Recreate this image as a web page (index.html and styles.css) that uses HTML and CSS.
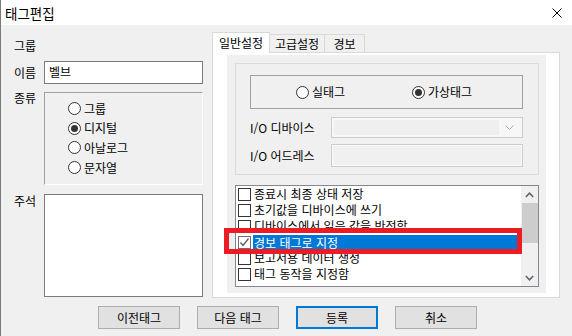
FILE: index.html
```html
<!DOCTYPE html>
<html lang="ko">
<head>
<meta charset="UTF-8">
<title>태그편집</title>
<link rel="stylesheet" href="styles.css">
</head>
<body>
<div class="window">
    <div class="titlebar">
        <span class="title">태그편집</span>
        <svg class="close" width="10" height="10" viewBox="0 0 10 10"><path d="M0.5 0.5 L9.5 9.5 M9.5 0.5 L0.5 9.5" stroke="#000" stroke-width="1"/></svg>
    </div>

    <div class="content">
        <div class="left">
            <div class="row r-group"><span class="lbl">그룹</span></div>
            <div class="row r-name"><span class="lbl">이름</span><div class="field">벨브</div></div>
            <div class="row r-kind">
                <span class="lbl">종류</span>
                <div class="kindbox">
                    <div class="radio"><span class="dot"></span>그룹</div>
                    <div class="radio on"><span class="dot"></span>디지털</div>
                    <div class="radio"><span class="dot"></span>아날로그</div>
                    <div class="radio"><span class="dot"></span>문자열</div>
                </div>
            </div>
            <div class="row r-memo"><span class="lbl">주석</span><div class="memo"></div></div>
        </div>

        <div class="tabs">
            <div class="tabstrip">
                <div class="tab active">일반설정</div>
                <div class="tab t2">고급설정</div>
                <div class="tab t3">경보</div>
            </div>
            <div class="panel">
                <div class="pane">
                    <div class="groupbox">
                        <div class="typebox">
                            <div class="radio opt"><span class="dot"></span>실태그</div>
                            <div class="radio on"><span class="dot"></span>가상태그</div>
                        </div>
                        <div class="frow combo-row">
                            <span class="flbl">I/O 디바이스</span>
                            <div class="combo">
                                <div class="combo-field"></div>
                                <svg width="9" height="5" viewBox="0 0 9 5"><path d="M0.5 0.5 L4.5 4.5 L8.5 0.5" fill="none" stroke="#a8a8a8" stroke-width="1"/></svg>
                            </div>
                        </div>
                        <div class="frow addr-row">
                            <span class="flbl">I/O 어드레스</span>
                            <div class="textbox"></div>
                        </div>
                    </div>

                    <div class="listbox">
                        <ul class="items">
                            <li><span class="chk"></span><span class="txt">종료시 최종 상태 저장</span></li>
                            <li><span class="chk"></span><span class="txt">초기값을 디바이스에 쓰기</span></li>
                            <li><span class="chk"></span><span class="txt">디바이스에서 읽은 값을 반전함</span></li>
                            <li class="sel"><span class="chk"><svg width="11" height="11" viewBox="0 0 11 11"><path d="M1.5 5.5 L4 8.5 L9.5 1.5" fill="none" stroke="#5a5a5a" stroke-width="1.3"/></svg></span><span class="txt">경보 태그로 지정</span></li>
                            <li><span class="chk"></span><span class="txt">보고서용 데이터 생성</span></li>
                            <li><span class="chk"></span><span class="txt">태그 동작을 지정함</span></li>
                        </ul>
                        <div class="scrollbar">
                            <div class="sb-btn"><svg width="9" height="6" viewBox="0 0 9 6"><path d="M0.8 5 L4.5 1.2 L8.2 5" fill="none" stroke="#606060" stroke-width="1.5"/></svg></div>
                            <div class="sb-track"><div class="sb-thumb"></div></div>
                            <div class="sb-btn"><svg width="9" height="6" viewBox="0 0 9 6"><path d="M0.8 1 L4.5 4.8 L8.2 1" fill="none" stroke="#606060" stroke-width="1.5"/></svg></div>
                        </div>
                        <div class="mark"></div>
                    </div>
                </div>
            </div>
        </div>
    </div>

    <div class="buttons">
        <button class="btn">이전태그</button>
        <button class="btn">다음 태그</button>
        <button class="btn default">등록</button>
        <button class="btn">취소</button>
    </div>
</div>
</body>
</html>
```

FILE: styles.css
```css
body { margin:0; width:572px; height:336px; overflow:hidden; background:#f0f0f0; font-family:"Noto Sans CJK KR","Liberation Sans",sans-serif; font-size:12px; color:#000; }
.window { height:336px; border-left:1px solid #7a7a7a; box-sizing:border-box; }

/* title bar */
.titlebar { height:25px; background:#fff; display:flex; align-items:center; justify-content:space-between; padding:0 10px 0 4px; font-size:13.5px; }
.close { display:block; }

.content { display:flex; align-items:flex-start; padding-left:13px; }

/* left column */
.left { width:189px; padding-top:13px; }
.row { display:flex; }
.lbl { width:30px; flex:none; line-height:16px; }
.r-name { margin-top:7px; align-items:center; }
.field { width:159px; height:23px; box-sizing:border-box; border:1px solid #7a7a7a; background:#fff; padding-left:4px; line-height:20px; }
.r-kind { margin-top:8px; }
.r-kind .lbl { line-height:14px; margin-top:-1px; }
.kindbox { width:159px; height:93px; box-sizing:border-box; border:1px solid #fff; border-left-color:#a0a0a0; border-top-color:#a0a0a0; padding:6px 0 0 23px; }
.kindbox .radio { height:19.6px; }
.r-memo { margin-top:9px; }
.r-memo .lbl { line-height:14px; }
.memo { width:159px; height:103px; box-sizing:border-box; border:1px solid #7a7a7a; background:#fff; }

/* radio buttons */
.radio { display:flex; align-items:center; line-height:14px; }
.dot { width:13px; height:13px; box-sizing:border-box; border:1px solid #333; border-radius:50%; background:#fff; margin-right:3px; position:relative; flex:none; }
.radio.on .dot::after { content:""; position:absolute; left:2px; top:2px; width:7px; height:7px; border-radius:50%; background:#333; }

/* tabs */
.tabs { margin-left:9px; width:348px; }
.tabstrip { display:flex; align-items:flex-end; height:20px; margin-top:7px; position:relative; z-index:1; }
.tab { height:18px; box-sizing:border-box; border:1px solid #d9d9d9; border-bottom:none; background:#f0f0f0; text-align:center; line-height:17px; }
.tab.active { width:58px; height:21px; background:#fff; margin-bottom:-1px; line-height:19px; }
.tab.t2 { width:55px; border-left:none; }
.tab.t3 { width:40px; border-left:none; }
.panel { height:246px; box-sizing:border-box; border:1px solid #d9d9d9; background:#fff; padding:2px 13px 4px 14px; }
.pane { height:238px; box-sizing:border-box; background:#f0f0f0; padding:8px 7px 0 8px; }

.groupbox { height:112px; box-sizing:border-box; border:1px solid #dcdcdc; padding:11px 15px 0 14px; }
.typebox { height:34px; box-sizing:border-box; border:1px solid #a0a0a0; display:flex; align-items:center; padding-left:45px; }
.typebox .opt { width:116px; }
.frow { display:flex; align-items:center; }
.combo-row { margin-top:8px; }
.addr-row { margin-top:6px; }
.flbl { width:81px; flex:none; }
.combo { width:192px; height:21px; box-sizing:border-box; border:1px solid #cccccc; background:#f7f7f7; display:flex; align-items:center; padding:2px 8px 2px 2px; gap:6px; }
.combo-field { flex:1; height:15px; background:#efefef; }
.combo svg { display:block; }
.textbox { width:192px; height:23px; box-sizing:border-box; border:1px solid #cccccc; box-shadow:inset 0 0 0 1px #fafafa; background:#f0f0f0; }

/* list */
.listbox { margin-top:10px; height:102px; box-sizing:border-box; border:1px solid #828790; background:#fff; display:flex; position:relative; }
.items { list-style:none; margin:0; padding:0; flex:1; min-width:0; overflow:hidden; }
.items li { height:16px; display:flex; align-items:center; }
.chk { width:13px; height:13px; box-sizing:border-box; border:1px solid #333; background:#fff; margin:0 2px 0 2px; flex:none; display:flex; align-items:center; justify-content:center; }
.chk svg { display:block; }
.txt { line-height:16px; padding-left:1px; flex:1; white-space:nowrap; }
.sel .chk { border-color:#6d6d6d; }
.sel .txt { background:#0078d7; color:#fff; height:15px; line-height:15px; }

.scrollbar { width:17px; flex:none; background:#f0f0f0; display:flex; flex-direction:column; }
.sb-btn { height:17px; display:flex; align-items:center; justify-content:center; }
.sb-track { flex:1; }
.sb-thumb { height:40px; margin-left:1px; background:#cdcdcd; }

.mark { position:absolute; left:-12px; top:42px; width:298px; height:26px; box-sizing:border-box; border:5px solid #ed1c24; }

/* buttons */
.buttons { display:flex; gap:17px; padding:8px 0 0 97px; }
.btn { width:82px; height:23px; box-sizing:border-box; border:1px solid #adadad; background:#e1e1e1; font-family:inherit; font-size:12px; padding:0; line-height:20px; color:#000; }
.btn.default { border:2px solid #0078d7; }
```
